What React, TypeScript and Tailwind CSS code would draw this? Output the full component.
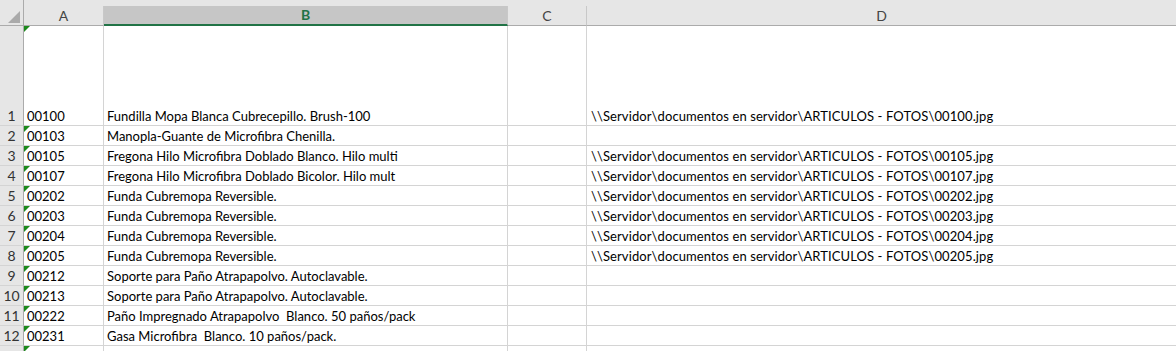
import React from 'react';

const PATH = '\\\\Servidor\\documentos en servidor\\ARTICULOS - FOTOS\\';

const rows: { a: string; b: string; d?: boolean }[] = [
  { a: '00100', b: 'Fundilla Mopa Blanca Cubrecepillo. Brush-100', d: true },
  { a: '00103', b: 'Manopla-Guante de Microfibra Chenilla.' },
  { a: '00105', b: 'Fregona Hilo Microfibra Doblado Blanco. Hilo multi', d: true },
  { a: '00107', b: 'Fregona Hilo Microfibra Doblado Bicolor. Hilo mult', d: true },
  { a: '00202', b: 'Funda Cubremopa Reversible.', d: true },
  { a: '00203', b: 'Funda Cubremopa Reversible.', d: true },
  { a: '00204', b: 'Funda Cubremopa Reversible.', d: true },
  { a: '00205', b: 'Funda Cubremopa Reversible.', d: true },
  { a: '00212', b: 'Soporte para Paño Atrapapolvo. Autoclavable.' },
  { a: '00213', b: 'Soporte para Paño Atrapapolvo. Autoclavable.' },
  { a: '00222', b: 'Paño Impregnado Atrapapolvo  Blanco. 50 paños/pack' },
  { a: '00231', b: 'Gasa Microfibra  Blanco. 10 paños/pack.' },
];

// little green "number stored as text" flag
const Flag = () => (
  <svg className="absolute left-0 top-0" width="6" height="6" viewBox="0 0 6 6">
    <polygon points="0,0 6,0 0,6" fill="#1c8a1c" />
  </svg>
);

const Row = ({ n, a, b, d, tall }: { n: number; a: string; b: string; d?: boolean; tall?: boolean }) => (
  <div className={`flex ${tall ? 'h-[100px]' : 'h-[20px]'}`}>
    <div className="w-[24px] shrink-0 bg-[#e6e6e6] border-r border-r-[#ababab] border-b border-b-[#d4d4d4] flex items-end justify-center pb-[2px] text-[#333] text-[14px]">
      {n}
    </div>
    <div className="relative w-[80px] shrink-0 border-r border-b border-[#d4d4d4] flex items-end pl-[3px] pb-[2px]">
      <Flag />
      {a}
    </div>
    <div className="w-[404px] shrink-0 border-r border-b border-[#d4d4d4] flex items-end pl-[3px] pb-[2px] whitespace-pre overflow-hidden">
      {b}
    </div>
    <div className="w-[79px] shrink-0 border-r border-b border-[#d4d4d4]" />
    <div className="flex-1 border-b border-[#d4d4d4] flex items-end pl-[4px] pb-[2px] whitespace-pre tracking-[0.1px]">
      {d ? `${PATH}${a}.jpg` : ''}
    </div>
  </div>
);

export default function App() {
  return (
    <div className="w-[1176px] h-[351px] overflow-hidden bg-white text-[13px] leading-none text-black" style={{ fontFamily: 'Lato, "Open Sans", sans-serif' }}>
      {/* column headers */}
      <div className="flex h-[26px] bg-[#e6e6e6] text-[#444] text-[14px]">
        <div className="w-[24px] shrink-0 border-r border-r-[#ababab] border-b border-b-[#ababab] flex items-end justify-end pr-[3px] pb-[2px]">
          <div className="w-[12px] h-[12px] bg-[#aaaaaa] [clip-path:polygon(100%_0,100%_100%,0_100%)]" />
        </div>
        <div className="w-[80px] shrink-0 mt-[6px] border-r border-r-[#c8c8c8] border-b border-b-[#ababab] flex items-center justify-center">A</div>
        <div className="w-[404px] shrink-0 mt-[6px] bg-[#c6c6c6] border-r border-r-[#c8c8c8] border-b-2 border-b-[#217346] flex items-center justify-center text-[#217346] font-bold">B</div>
        <div className="w-[79px] shrink-0 mt-[6px] border-r border-r-[#c8c8c8] border-b border-b-[#ababab] flex items-center justify-center">C</div>
        <div className="flex-1 mt-[6px] border-b border-b-[#ababab] flex items-center justify-center">D</div>
      </div>
      {rows.map((r, i) => (
        <Row key={i} n={i + 1} a={r.a} b={r.b} d={r.d} tall={i === 0} />
      ))}
      <div className="flex h-[20px]">
        <div className="w-[24px] shrink-0 bg-[#e6e6e6] border-r border-r-[#ababab]" />
        <div className="relative w-[80px] shrink-0 border-r border-[#d4d4d4]">
          <Flag />
        </div>
        <div className="w-[404px] shrink-0 border-r border-[#d4d4d4]" />
        <div className="w-[79px] shrink-0 border-r border-[#d4d4d4]" />
        <div className="flex-1" />
      </div>
    </div>
  );
}
